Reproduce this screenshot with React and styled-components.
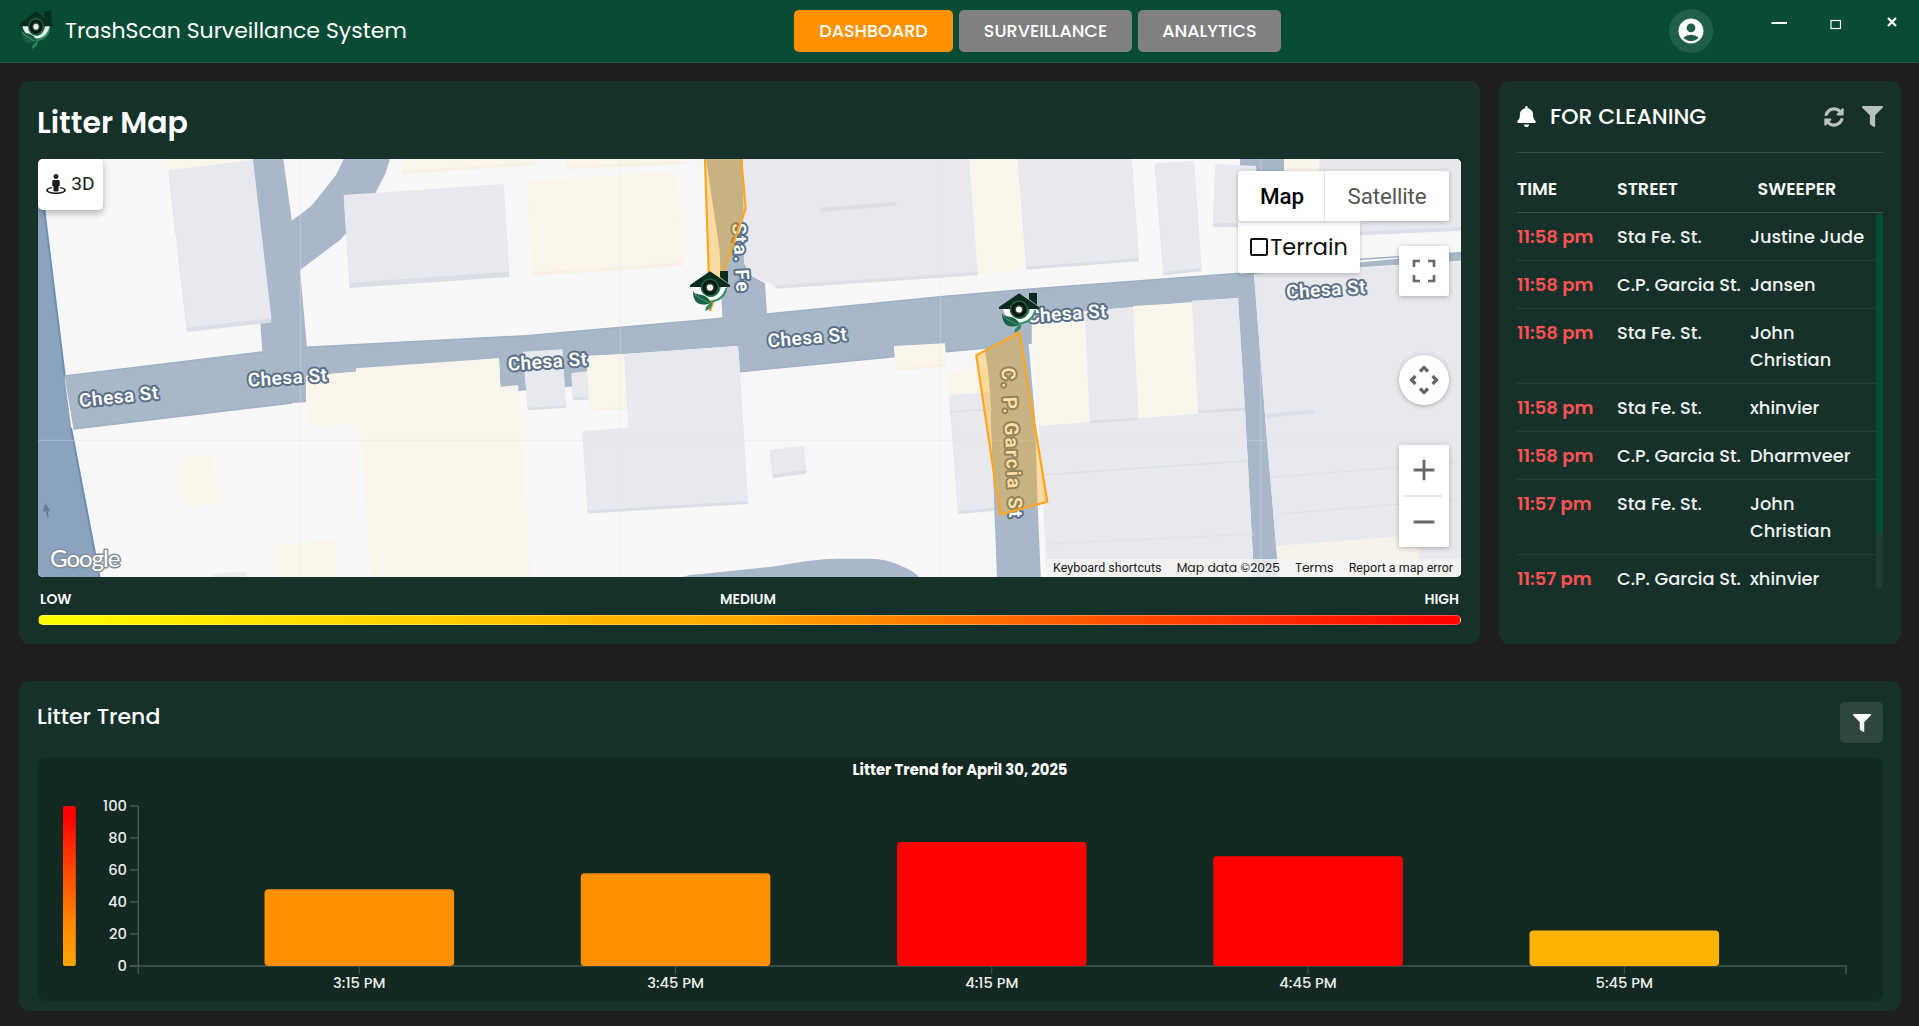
import React from "react";
import styled, { createGlobalStyle, css } from "styled-components";
import { FaBell, FaSyncAlt, FaFilter, FaStreetView } from "react-icons/fa";
import { MdAccountCircle } from "react-icons/md";

const GlobalStyle = createGlobalStyle`
  * { box-sizing: border-box; }
  body {
    margin: 0;
    background: #1e1e1e;
    color: #fff;
    font-family: Poppins, Inter, "Open Sans", sans-serif;
  }
  button { font: inherit; border: 0; padding: 0; }
`;

const Page = styled.div`
  display: flex;
  flex-direction: column;
  width: 1919px;
  height: 1026px;
  overflow: hidden;
`;

/* ---------- header ---------- */

const Header = styled.header`
  display: grid;
  grid-template-columns: 794px auto 1fr;
  height: 63px;
  background: #084c35;
  border-bottom: 1px solid #1f6049;
`;

const Brand = styled.div`
  display: flex;
  align-items: center;
  gap: 12px;
  padding: 0 0 2px 19px;
  svg { opacity: 0.9; }
`;

const BrandName = styled.span`
  font-size: 22px;
  font-weight: 400;
`;

const Nav = styled.nav`
  display: flex;
  gap: 6px;
  padding-top: 10px;
`;

const NavButton = styled.button`
  width: ${(p) => p.$width}px;
  height: 42px;
  border-radius: 5px;
  background: ${(p) => (p.$active ? "#ff9100" : "#808080")};
  color: #fff;
  font-size: 17.6px;
  font-weight: 500;
`;

const HeaderRight = styled.div`
  display: flex;
  justify-content: flex-end;
  padding: 9px 17px 0 0;
`;

const Avatar = styled.div`
  display: flex;
  align-items: center;
  justify-content: center;
  width: 44px;
  height: 44px;
  margin-right: 53px;
  border-radius: 50%;
  background: rgba(255, 255, 255, 0.1);
`;

const WindowControls = styled.div`
  display: flex;
  width: 136px;
  justify-content: center;
  padding-top: 2px;
`;

/* ---------- panels ---------- */

const Main = styled.main`
  display: grid;
  grid-template-columns: 1461px 402px;
  grid-template-rows: 563px 330px;
  column-gap: 19px;
  row-gap: 37px;
  padding: 18px 17px 15px 19px;
`;

const Panel = styled.section`
  display: flex;
  flex-direction: column;
  background: #163129;
  border-radius: 10px;
`;

const MapPanel = styled(Panel)`
  padding: 0 19px;
`;

const MapTitle = styled.h1`
  display: flex;
  align-items: center;
  height: 78px;
  margin: 0 0 0 -1px;
  padding-top: 5px;
  font-size: 30px;
  font-weight: 600;
`;

const MapView = styled.div`
  position: relative;
  height: 418px;
  border-radius: 5px;
  overflow: hidden;
  background: #f7f7f7;
`;

const MapSvg = styled.svg`
  display: block;
  width: 100%;
  height: 100%;
`;

const floating = css`
  position: absolute;
  display: flex;
  align-items: center;
  justify-content: center;
  background: #fff;
  box-shadow: 0 1px 5px rgba(0, 0, 0, 0.28);
`;

const ThreeDButton = styled.button`
  ${floating}
  top: 0;
  left: 0;
  width: 65px;
  height: 51px;
  gap: 5px;
  padding-bottom: 2px;
  border-radius: 5px;
  box-shadow: 0 3px 7px rgba(0, 0, 0, 0.3);
  color: #1c1c1c;
  font-family: Roboto, sans-serif;
  font-size: 19.2px;
`;

const MapTypes = styled.div`
  ${floating}
  top: 12px;
  right: 12px;
  width: 211px;
  height: 50px;
  border-radius: 2px;
  font-family: Roboto, sans-serif;
`;

const MapType = styled.button`
  width: ${(p) => p.$width}px;
  height: 50px;
  padding-left: ${(p) => (p.$active ? 2 : 0)}px;
  background: none;
  font-size: 22.4px;
  letter-spacing: -0.15px;
  font-weight: ${(p) => (p.$active ? 500 : 400)};
  color: ${(p) => (p.$active ? "#000" : "#565656")};
  border-right: ${(p) => (p.$active ? "1px solid #e6e6e6" : "0")};
`;

const TerrainOption = styled.label`
  ${floating}
  top: 62px;
  left: 1200px;
  width: 122px;
  height: 52px;
  gap: 2px;
  border-radius: 2px;
  color: #111;
  font-size: 22.4px;
  box-shadow: 0 2px 4px rgba(0, 0, 0, 0.2);
`;

const Checkbox = styled.span`
  width: 18px;
  height: 18px;
  border: 2px solid #111;
  border-radius: 2px;
`;

const MapControl = styled.button`
  ${floating}
  top: ${(p) => p.$top}px;
  right: 12px;
  width: 50px;
  height: 50px;
  border-radius: ${(p) => (p.$round ? "50%" : "2px")};
`;

const ZoomControl = styled.div`
  ${floating}
  flex-direction: column;
  top: 286px;
  right: 12px;
  width: 50px;
  height: 102px;
  border-radius: 2px;
`;

const Attribution = styled.div`
  position: absolute;
  right: 0;
  bottom: 0;
  display: flex;
  justify-content: space-between;
  align-items: center;
  width: 414px;
  height: 18px;
  padding: 0 8px 0 6px;
  background: rgba(245, 245, 245, 0.78);
  color: #1a1a1a;
  line-height: 18px;
  white-space: nowrap;
`;

const Credit = styled.span`
  font-size: 12.4px;
`;

const CreditButton = styled.button`
  background: none;
  color: inherit;
  font-family: Roboto, sans-serif;
  font-size: 12.5px;
  line-height: 18px;
`;

const LegendLabels = styled.div`
  display: flex;
  justify-content: space-between;
  height: 38px;
  padding: 14px 2px 0;
  font-size: 13.9px;
  font-weight: 600;
  line-height: 17px;
  color: #f4f6f5;
`;

const LegendBar = styled.div`
  height: 10px;
  border: 1px solid rgba(255, 255, 255, 0.3);
  border-radius: 5px;
  background: linear-gradient(to right, #ffff00, #ffa500 50%, #ff0000);
`;

/* ---------- cleaning list ---------- */

const CleaningPanel = styled(Panel)`
  padding: 0 18px;
`;

const CleaningHeader = styled.div`
  display: flex;
  align-items: center;
  height: 72px;
  border-bottom: 1px solid rgba(255, 255, 255, 0.13);
  > svg { margin-left: -1px; }
`;

const CleaningTitle = styled.h2`
  flex: 1;
  margin: 0 0 0 13px;
  font-size: 22px;
  font-weight: 500;
`;

const IconActions = styled.div`
  display: flex;
  align-items: center;
  gap: 18px;
  color: rgba(255, 255, 255, 0.7);
`;

const ColumnHeads = styled.div`
  display: grid;
  grid-template-columns: 100px 140.5px 1fr;
  align-items: center;
  height: 60px;
  padding-top: 12px;
  border-bottom: 1px solid rgba(255, 255, 255, 0.16);
  font-size: 17.6px;
  font-weight: 600;
  color: #f6f8f7;
`;

const ListViewport = styled.div`
  display: flex;
  height: 375px;
  overflow: hidden;
`;

const Rows = styled.div`
  flex: 1;
`;

const Row = styled.div`
  display: grid;
  grid-template-columns: 100px 133px 1fr;
  padding: 10px 0;
  border-bottom: 1px solid rgba(255, 255, 255, 0.07);
  font-size: 17.8px;
  font-weight: 500;
  line-height: 27px;
  color: #eef1f0;
`;

const Time = styled.span`
  color: #ff5252;
  font-size: 18px;
  font-weight: 600;
`;

const Street = styled.span`
  white-space: nowrap;
`;

const Sweeper = styled.span`
  padding-right: 8px;
`;

const ScrollTrack = styled.div`
  width: 7px;
  border-radius: 4px;
  background: #223c35;
`;

const ScrollThumb = styled.div`
  height: 321px;
  border-radius: 4px;
  background: #084c35;
`;

/* ---------- trend ---------- */

const TrendPanel = styled(Panel)`
  grid-column: 1 / -1;
  padding: 0 18px 10px 19px;
`;

const TrendHeader = styled.div`
  display: flex;
  justify-content: space-between;
  height: 77px;
`;

const TrendTitle = styled.h2`
  margin: 22px 0 0 -1px;
  font-size: 22px;
  font-weight: 500;
  line-height: 27px;
`;

const FilterButton = styled.button`
  display: flex;
  align-items: center;
  justify-content: center;
  width: 43px;
  height: 41px;
  margin-top: 21px;
  border-radius: 5px;
  background: #2e463e;
  color: #fff;
`;

const ChartBox = styled.div`
  flex: 1;
  border-radius: 8px;
  background: #122821;
  overflow: hidden;
  svg { display: block; }
`;

const AxisText = styled.text`
  font-size: 14.7px;
  font-weight: 500;
  fill: #e9eceb;
`;

const ChartTitle = styled.text`
  font-size: 14.8px;
  font-weight: 700;
  fill: #fff;
`;

const StreetLabel = styled.text`
  font-family: Roboto, sans-serif;
  font-size: 19px;
  font-weight: 600;
  letter-spacing: ${(p) => p.$tracking}px;
  fill: #fff;
  stroke: #5b7088;
  stroke-width: 4px;
  stroke-linejoin: round;
  paint-order: stroke;
  text-anchor: middle;
`;

const Watermark = styled.text`
  font-family: Lato, sans-serif;
  font-size: 24px;
  letter-spacing: -1px;
  fill: #fff;
  stroke: #858f9a;
  stroke-width: 3px;
  stroke-linejoin: round;
  paint-order: stroke;
`;

function HouseEye({ x, y, width = 40, height = 40 }) {
  return (
    <svg x={x} y={y} width={width} height={height} viewBox="0 0 40 40" preserveAspectRatio="none">
      <path d="M4 14C4 22 12 29 21 29C30 29 37 22 36 14Z" fill="#fff" />
      <path d="M11 14C12 22 16 26 21 26C27 26 31 20 31 14Z" fill="#2c8a60" />
      <path d="M37 17C36 26 30 30 22 31.500C19 32 17.500 31.500 17 30.500C26 29.500 33 26 35.500 17Z" fill="#2f9467" />
      <path d="M3 20C4 23 8 23 12 24C17 25.500 20 28 20 32C15 34.500 8 34 5.500 30C3.500 27 3 24 3 20Z" fill="#1b6244" />
      <path d="M4 22C7 27 12 28 18 31.500" fill="none" stroke="#49a67c" strokeWidth="1" />
      <path d="M22.500 31C19 33 15 35 15.500 40C20 38 22.500 36 22.500 31Z" fill="#2c8a60" />
      <path d="M30 0H38V12L30 6Z" fill="#092c1c" />
      <path d="M20 0.300L40 14V16H0V14Z" fill="#092c1c" />
      <circle cx="20" cy="16.500" r="9.300" fill="#1f5f44" />
      <circle cx="20" cy="16.500" r="7.600" fill="#07150f" />
      <circle cx="20" cy="16.500" r="4.600" fill="#29443a" />
      <circle cx="20" cy="16.500" r="3.100" fill="#fff" />
    </svg>
  );
}

const ROAD = "#a9b8c9";
const LAND = "#f7f7f7";
const GRAY = "#e8e9ee";
const CREAM = "#f9f5ea";

const roads = [
  "64.500,376 262.400,352 260.400,324 253,159 283.300,159 291.800,220.700 311.400,206 336,175 343.700,159 390,159 385.700,173 375.500,192.700 346,233.300 341,239.300 300,270 307,347.300 526.500,335.700 640,325.700 722.400,318.300 719.600,250 706,159 743,159 744,263 751.800,276 765,283.300 767,314 940.400,296.700 1034,288.700 1240,273.300 1238,298 1108,309.300 1031.800,316 1031.800,344 1028.600,344 1035,416.700 1037.500,500 1040.800,577 997,577 993.900,500 988,370 984.500,348.300 946,351.700 894,356.700 740,371.700 738,346 624.500,354 588,356 588,386 565,387 518,391 500.400,388 499,358.300 356,371.700 306,376 306,402.300 292,403 73.500,429",
  "1238,298 1245,410 1254,577 1278.700,577 1266.700,436.700 1254,274 1461,260.700 1461,252.700 1238,274",
  "1240,159 1284,159 1284,180 1240,180",
];

const shapes = [
  ["167.300,159 253,159 253,161 168.600,171", CREAM],
  ["168.600,170 253,160 271.400,318.300 187,327.700", GRAY, 4.3],
  ["343.700,195 503.700,184 509.400,271.700 349.800,282.700", GRAY, 5.300],
  ["402,159 537,159 537,162 402.500,171", CREAM, 3],
  ["566,159 689,159 689,161 566,166", CREAM, 3],
  ["526.500,181.300 676,170.700 682.900,262 533,272", CREAM, 4],
  ["306,376 356,371.700 356,368.300 499,358.300 500.400,386.700 518,385.300 531.400,577 370.600,577 360.400,424 309,426.700", CREAM],
  ["182.400,457.700 213,456 216.300,504 185.700,506.700", CREAM],
  ["278.800,544.300 334.700,540 337,577 279.500,577", CREAM],
  ["211.800,574 246.500,571.300 246.500,577 211.800,577", "#ebeced"],
  ["523,351.700 562.400,349.300 566,405.300 527.800,407.700", GRAY, 2.500],
  ["571.400,373 588,371.300 588.600,396.700 573,397.300", GRAY, 3],
  ["586.500,356 624.500,354 627.800,406.700 590,409.300", CREAM, 2],
  ["624.500,354 738,346 740,371.700 748,501 587.800,510.500 582.400,431 629,427.700", GRAY, 3],
  ["769.800,450 804,446 806.500,470 773,474.500", GRAY, 3.500],
  ["743,159 969.400,159 978,272.700 775.500,286 751.800,276 744,263", GRAY],
  ["969.400,159 1018,159 1026.500,270 978,274.700", CREAM],
  ["1018,159 1131.800,159 1139,258.300 1026.500,266.700", GRAY, 3],
  ["1155,163.300 1194,161 1201.600,268.300 1163.300,272.300", GRAY, 3],
  ["1215.300,164 1256,166 1260,223 1213,223.300", GRAY, 4],
  ["1284,159 1319.500,159 1319.500,175 1284,175", CREAM],
  ["1319.500,159 1461,159 1461,227 1360,232 1319,234", GRAY, 3],
  ["1254,274 1461,261.500 1461,577 1279,577 1266.700,436.700", GRAY],
  ["1276.700,545.700 1418,535 1420,577 1279,577", "#f6f2ea"],
  ["893.900,346 945,343.300 946,364 896.500,368", CREAM, 2.500],
  ["947,371.700 987.800,368.300 990,392 949.400,395", CREAM],
  ["949.400,395 990,392 993.900,508 958,511", GRAY, 3],
  ["1031.800,326.700 1084.500,321.700 1089.800,423.300 1038.800,426", CREAM],
  ["1084.500,311 1133,307.300 1138.800,419.300 1089.800,423", GRAY],
  ["1133,306 1191.800,302.700 1198,413.300 1138.800,417.700", CREAM],
  ["1191.800,300.700 1238,298 1245,410 1198,413.500", GRAY],
  ["1038.800,426 1245,410 1254,577 1047,577", GRAY],
];

const seams = [
  ["M820.800 210L896.700 203.700", "#dcdee3", 4],
  ["M775.500 287L978 273.500", "#dfe0e6", 3.500],
  ["M1089.800 422L1137 419", "#dcdee3", 2.500],
  ["M1198 412L1245 409", "#dcdee3", 3],
  ["M1043 475L1141 468L1248 461", "#dddfe4", 1.500],
  ["M949.800 412L992 409", "#dddfe4", 1.500],
  ["M1047 544L1254 534", "#e2e3e8", 1],
  ["M1265.700 416L1315 411.500", "#dddfe9", 4],
  ["M1272 477.500L1461 462", "#dfe0e5", 1],
  ["M1278 514L1461 499", "#dfe0e5", 1],
  ["M1360 233.500L1461 229", "#dcdee9", 3.500],
];

const edges =
  "M64.500 376L262.400 352M307 347.300L526.500 335.700L722.400 318.300M767 314L940.400 296.700L1034 288.700L1240 273.300M73.500 429L292 403M740 371.700L894 356.700M946 351.700L984 348.300M1360 259.300L1461 252.700";

const labels = [
  [119.5, 403, -6],
  [288, 384, -4],
  [548, 368, -4],
  [808, 344, -5],
  [1067.5, 320, -4],
  [1326.5, 296, -4],
];

function StreetMap() {
  return (
    <MapSvg viewBox="38 159 1423 418">
      <rect x="38" y="159" width="1423" height="418" fill={LAND} />
      <polygon points="38,159 40,159 43.700,210 64.500,377 71.400,429 100,577 38,577" fill="#8aa3bf" />
      <path d="M42 190L44.300 210L65 378M71 428L99.500 577" stroke="#6c8fb6" strokeWidth="2" fill="none" />
      {roads.map((p) => <polygon key={p} points={p} fill={ROAD} />)}
      <path d="M682.900 577C690 574.500 695 574.500 700 574.300L771.400 566.700C785 565 798 562 810 560.700C825 559 832 558.700 845 558.700H867C876 558.700 882 559.500 887.800 561C897 564 902 566 908 569C913 571.500 916 574 919 577Z" fill={ROAD} />
      <path d={edges} stroke="#a0b1c3" strokeWidth="1.500" fill="none" />
      {shapes.map(([points, fill, depth]) => (
        <g key={points}>
          {depth && (
            <polygon
              points={points}
              fill={fill === CREAM ? "#f7f1e3" : "#dcdee5"}
              transform={`translate(0 ${depth})`}
            />
          )}
          <polygon points={points} fill={fill} />
        </g>
      ))}
      {seams.map(([d, stroke, w]) => <path key={d} d={d} stroke={stroke} strokeWidth={w} fill="none" />)}
      <path d="M300.400 159V577M620.400 159V577M940.400 159V577M1260.700 159V577M38 440.300H1461" stroke="#dfe3e6" strokeOpacity="0.4" fill="none" />
      <path d="M45.500 503L50.500 511.500L47.800 511.300L49 517L47 517.200L46 511.300L42.500 511.800Z" fill="#6a7f93" />
      {labels.map(([x, y, angle]) => (
        <StreetLabel key={x} $tracking={0.5} transform={`translate(${x} ${y}) rotate(${angle})`}>Chesa St</StreetLabel>
      ))}
      <StreetLabel $tracking={1.600} transform="translate(734.500 258.500) rotate(86.500)">Sta. Fe</StreetLabel>
      <StreetLabel $tracking={2.200} transform="translate(1005.500 444) rotate(87)">C. P. Garcia St</StreetLabel>
      <g fill="#ffa500" fillOpacity="0.35" stroke="#ffa621" strokeWidth="2.200">
        <polygon points="704.700,150 740.500,150 745.700,208.300 710,311" />
        <polygon points="1019.600,332.300 1047.300,501.700 1000,514.700 976.300,355.300" />
      </g>
      <HouseEye x={690} y={271} />
      <HouseEye x={999} y={293} />
      <Watermark x="50" y="567">Google</Watermark>
    </MapSvg>
  );
}

const bars = [
  { label: "3:15 PM", top: 889.3, color: "#ff9100" },
  { label: "3:45 PM", top: 873.2, color: "#ff9100" },
  { label: "4:15 PM", top: 842, color: "#ff0000" },
  { label: "4:45 PM", top: 856.3, color: "#ff0000" },
  { label: "5:45 PM", top: 930.6, color: "#ffb300" },
];

function TrendChart() {
  return (
    <svg width="1846" height="243" viewBox="38 758 1846 243">
      <defs>
        <linearGradient id="level" x1="0" y1="0" x2="0" y2="1">
          <stop offset="0.050" stopColor="#ff0000" />
          <stop offset="0.750" stopColor="#ff8c00" />
          <stop offset="1" stopColor="#ffa500" />
        </linearGradient>
      </defs>
      <ChartTitle x="960" y="775" textAnchor="middle">Litter Trend for April 30, 2025</ChartTitle>
      <rect x="63" y="806" width="12.800" height="160" rx="2" fill="url(#level)" />
      <path d="M138.300 806V974M130 966H1846V974" stroke="#46574f" strokeWidth="1.500" fill="none" />
      {[100, 80, 60, 40, 20, 0].map((v, i) => (
        <g key={v}>
          <path d={`M130 ${806 + i * 32}H138`} stroke="#46574f" strokeWidth="1.500" />
          <AxisText x="127" y={811 + i * 32} textAnchor="end">{v}</AxisText>
        </g>
      ))}
      {bars.map((b, i) => {
        const cx = 359.3 + i * 316.25;
        return (
          <g key={b.label}>
            <rect x={cx - 94.8} y={b.top} width="189.600" height={966 - b.top} rx="4" fill={b.color} />
            <path d={`M${cx} 967V974`} stroke="#46574f" />
            <AxisText x={cx} y="988" textAnchor="middle">{b.label}</AxisText>
          </g>
        );
      })}
    </svg>
  );
}

const tasks = [
  ["11:58 pm", "Sta Fe. St.", "Justine Jude"],
  ["11:58 pm", "C.P. Garcia St.", "Jansen"],
  ["11:58 pm", "Sta Fe. St.", "John Christian"],
  ["11:58 pm", "Sta Fe. St.", "xhinvier"],
  ["11:58 pm", "C.P. Garcia St.", "Dharmveer"],
  ["11:57 pm", "Sta Fe. St.", "John Christian"],
  ["11:57 pm", "C.P. Garcia St.", "xhinvier"],
];

export default function App() {
  return (
    <Page>
      <GlobalStyle />
      <Header>
        <Brand>
          <HouseEye width={34} height={38} />
          <BrandName>TrashScan Surveillance System</BrandName>
        </Brand>
        <Nav>
          <NavButton $active $width={159}>DASHBOARD</NavButton>
          <NavButton $width={173}>SURVEILLANCE</NavButton>
          <NavButton $width={143}>ANALYTICS</NavButton>
        </Nav>
        <HeaderRight>
          <Avatar><MdAccountCircle size={30} /></Avatar>
          <WindowControls>
            <svg width="136" height="30" viewBox="1766 11 136 30" fill="none" stroke="#fff">
              <path d="M1771.500 23H1787" strokeWidth="2" />
              <rect x="1831" y="20.500" width="9.500" height="8" strokeWidth="1.200" />
              <path d="M1888 18L1896 26M1896 18L1888 26" strokeWidth="2.200" />
            </svg>
          </WindowControls>
        </HeaderRight>
      </Header>

      <Main>
        <MapPanel>
          <MapTitle>Litter Map</MapTitle>
          <MapView>
            <StreetMap />
            <ThreeDButton><FaStreetView size={20} />3D</ThreeDButton>
            <TerrainOption><Checkbox />Terrain</TerrainOption>
            <MapTypes>
              <MapType $active $width={87}>Map</MapType>
              <MapType $width={124}>Satellite</MapType>
            </MapTypes>
            <MapControl $top={87}>
              <svg width="24" height="24" fill="none" stroke="#666" strokeWidth="2.600">
                <path d="M2 8V2H8M16 2H22V8M22 16V22H16M8 22H2V16" />
              </svg>
            </MapControl>
            <MapControl $top={196} $round>
              <svg width="30" height="30" fill="none" stroke="#666" strokeWidth="3.200">
                <path d="M11 6.500L15 2.500L19 6.500M11 23.500L15 27.500L19 23.500M6.500 11L2.500 15L6.500 19M23.500 11L27.500 15L23.500 19" />
              </svg>
            </MapControl>
            <ZoomControl>
              <svg width="50" height="102" fill="none" stroke="#666" strokeWidth="2.800">
                <path d="M14.700 25H35.300M25 14.700V35.300M14.700 77H35.300" />
                <path d="M6 51H43" stroke="#e2e2e2" strokeWidth="2" />
              </svg>
            </ZoomControl>
            <Attribution>
              <CreditButton>Keyboard shortcuts</CreditButton>
              <Credit>Map data ©2025</Credit>
              <Credit>Terms</Credit>
              <CreditButton>Report a map error</CreditButton>
            </Attribution>
          </MapView>
          <LegendLabels>
            <span>LOW</span>
            <span>MEDIUM</span>
            <span>HIGH</span>
          </LegendLabels>
          <LegendBar />
        </MapPanel>

        <CleaningPanel>
          <CleaningHeader>
            <FaBell size={21} />
            <CleaningTitle>FOR CLEANING</CleaningTitle>
            <IconActions>
              <FaSyncAlt size={20} />
              <FaFilter size={21} />
            </IconActions>
          </CleaningHeader>
          <ColumnHeads>
            <span>TIME</span>
            <span>STREET</span>
            <span>SWEEPER</span>
          </ColumnHeads>
          <ListViewport>
            <Rows>
              {tasks.map(([time, street, sweeper], i) => (
                <Row key={i}>
                  <Time>{time}</Time>
                  <Street>{street}</Street>
                  <Sweeper>{sweeper}</Sweeper>
                </Row>
              ))}
            </Rows>
            <ScrollTrack><ScrollThumb /></ScrollTrack>
          </ListViewport>
        </CleaningPanel>

        <TrendPanel>
          <TrendHeader>
            <TrendTitle>Litter Trend</TrendTitle>
            <FilterButton><FaFilter size={18} /></FilterButton>
          </TrendHeader>
          <ChartBox><TrendChart /></ChartBox>
        </TrendPanel>
      </Main>
    </Page>
  );
}
